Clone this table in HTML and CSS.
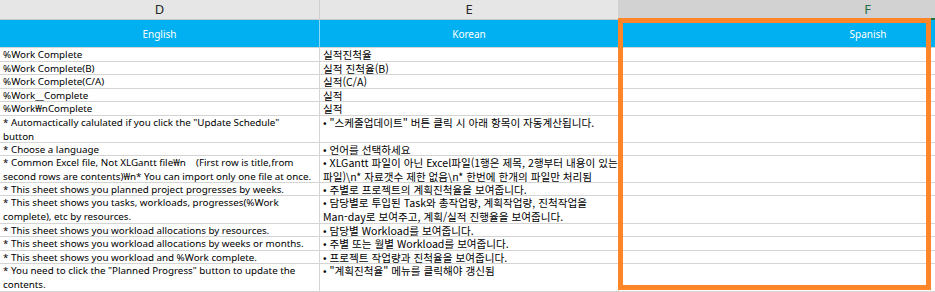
FILE: index.html
```html
<!DOCTYPE html>
<html lang="ko">
<head>
<meta charset="utf-8">
<title>XLGantt language sheet</title>
<link rel="stylesheet" href="styles.css">
</head>
<body>
<div class="sheet">
  <div class="grid">
    <div class="colhead">D</div>
    <div class="colhead">E</div>
    <div class="colhead sel">F</div>

    <div class="hcell">English</div>
    <div class="hcell">Korean</div>
    <div class="hcell last">Spanish</div>

    <div class="cell en r1">%Work Complete</div>
    <div class="cell ko r1">실적진척율</div>
    <div class="cell last r1"></div>

    <div class="cell en r2">%Work Complete(B)</div>
    <div class="cell ko r2">실적 진척율(B)</div>
    <div class="cell last r2"></div>

    <div class="cell en r1">%Work Complete(C/A)</div>
    <div class="cell ko r1">실적(C/A)</div>
    <div class="cell last r1"></div>

    <div class="cell en r2">%Work__Complete</div>
    <div class="cell ko r2">실적</div>
    <div class="cell last r2"></div>

    <div class="cell en r1">%Work₩nComplete</div>
    <div class="cell ko r1">실적</div>
    <div class="cell last r1"></div>

    <div class="cell en r27">* Automactically calulated if you click the "Update Schedule"<br>button</div>
    <div class="cell ko r27">• "스케줄업데이트" 버튼 클릭 시 아래 항목이 자동계산됩니다.</div>
    <div class="cell last r27"></div>

    <div class="cell en r2">* Choose a language</div>
    <div class="cell ko r2">• 언어를 선택하세요</div>
    <div class="cell last r2"></div>

    <div class="cell en r27">* Common Excel file, Not XLGantt file₩n&nbsp;&nbsp;&nbsp;&nbsp;(First row is title,from<br>second rows are contents)₩n* You can import only one file at once.</div>
    <div class="cell ko r27">• XLGantt 파일이 아닌 Excel파일(1행은 제목, 2행부터 내용이 있는<br>파일)\n* 자료갯수 제한 없음\n* 한번에 한개의 파일만 처리됨</div>
    <div class="cell last r27"></div>

    <div class="cell en r2">* This sheet shows you planned project progresses by weeks.</div>
    <div class="cell ko r2">• 주별로 프로젝트의 계획진척율을 보여줍니다.</div>
    <div class="cell last r2"></div>

    <div class="cell en r28">* This sheet shows you tasks, workloads, progresses(%Work<br>complete), etc by resources.</div>
    <div class="cell ko r28">• 담당별로 투입된 Task와 총작업량, 계획작업량, 진척작업을<br>Man-day로 보여주고, 계획/실적 진행율을 보여줍니다.</div>
    <div class="cell last r28"></div>

    <div class="cell en r2">* This sheet shows you workload allocations by resources.</div>
    <div class="cell ko r2">• 담당별 Workload를 보여줍니다.</div>
    <div class="cell last r2"></div>

    <div class="cell en r1">* This sheet shows you workload allocations by weeks or months.</div>
    <div class="cell ko r1">• 주별 또는 월별 Workload를 보여줍니다.</div>
    <div class="cell last r1"></div>

    <div class="cell en r2">* This sheet shows you workload and %Work complete.</div>
    <div class="cell ko r2">• 프로젝트 작업량과 진척율을 보여줍니다.</div>
    <div class="cell last r2"></div>

    <div class="cell en r28">* You need to click the "Planned Progress" button to update the<br>contents.</div>
    <div class="cell ko r28">• "계획진척율" 메뉴를 클릭해야 갱신됨</div>
    <div class="cell last r28"></div>
  </div>
  <div class="highlight"></div>
</div>
</body>
</html>
```
FILE: styles.css
```css
html, body {
  margin: 0;
  padding: 0;
  background: #ffffff;
  overflow: hidden;
}

.sheet {
  position: relative;
  width: 935px;
  height: 292px;
  overflow: hidden;
}

.grid {
  display: grid;
  grid-template-columns: 320px 299px 498px;
  grid-auto-rows: auto;
  width: 1117px;
  font-family: "Noto Sans", "Noto Sans CJK KR", sans-serif;
  font-size: 11px;
  color: #000;
}

.colhead {
  height: 20px;
  box-sizing: border-box;
  background: #e6e6e6;
  border-right: 1px solid #d0d0d0;
  border-bottom: 1px solid #c8c8c8;
  display: flex;
  align-items: center;
  justify-content: center;
  font-family: "Noto Sans", sans-serif;
  font-size: 13px;
  color: #262626;
  padding-bottom: 1px;
}

.colhead.sel {
  background: #d2d2d2;
  color: #217346;
  border-bottom: 2px solid #217346;
}

.hcell {
  height: 28px;
  box-sizing: border-box;
  background: #00b0f0;
  color: #ffffff;
  border-right: 1px solid #8fd8f5;
  border-bottom: 1px solid #d4d4d4;
  display: flex;
  align-items: center;
  justify-content: center;
  font-size: 10px;
}

.cell {
  box-sizing: border-box;
  border-right: 1px solid #d4d4d4;
  border-bottom: 1px solid #d4d4d4;
  padding: 0 0 0 3px;
  line-height: 13.5px;
  white-space: nowrap;
  overflow: visible;
}

.cell.en {
  font-family: "Noto Sans", sans-serif;
  font-size: 9.8px;
}

.cell.ko {
  font-family: "Noto Sans CJK KR", sans-serif;
  font-size: 10.6px;
}

.r1 { height: 14px; }
.r2 { height: 13px; }
.r27 { height: 27px; }
.r28 { height: 28px; }

.last {
  border-right: none;
}

.highlight {
  position: absolute;
  left: 618px;
  top: 18px;
  width: 313px;
  height: 272px;
  box-sizing: border-box;
  border: 5px solid #fe8629;
}
```
